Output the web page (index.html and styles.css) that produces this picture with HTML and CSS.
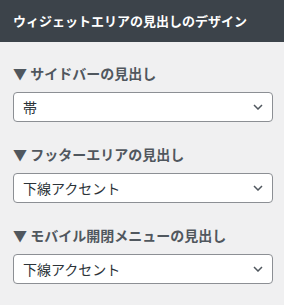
FILE: index.html
```html
<!DOCTYPE html>
<html lang="ja">
<head>
    <meta charset="UTF-8">
    <meta name="viewport" content="width=device-width, initial-scale=1.0">
    <title>ウィジェットエリアの見出しのデザイン</title>
    <link rel="stylesheet" href="styles.css">
</head>
<body>
    <!-- パネルのタイトル -->
    <div class="panel-title">ウィジェットエリアの見出しのデザイン</div>

    <div class="panel-body">
        <div class="control">
            <div class="control-label">▼ サイドバーの見出し</div>
            <div class="select-box">
                <span class="select-value">帯</span>
                <svg class="chevron" width="10" height="6" viewBox="0 0 10 6"><path d="M1 1 L5 5 L9 1" fill="none" stroke="#50575e" stroke-width="1.5"/></svg>
            </div>
        </div>

        <div class="control">
            <div class="control-label">▼ フッターエリアの見出し</div>
            <div class="select-box">
                <span class="select-value">下線アクセント</span>
                <svg class="chevron" width="10" height="6" viewBox="0 0 10 6"><path d="M1 1 L5 5 L9 1" fill="none" stroke="#50575e" stroke-width="1.5"/></svg>
            </div>
        </div>

        <div class="control">
            <div class="control-label">▼ モバイル開閉メニューの見出し</div>
            <div class="select-box">
                <span class="select-value">下線アクセント</span>
                <svg class="chevron" width="10" height="6" viewBox="0 0 10 6"><path d="M1 1 L5 5 L9 1" fill="none" stroke="#50575e" stroke-width="1.5"/></svg>
            </div>
        </div>
    </div>
</body>
</html>
```

FILE: styles.css
```css
body {
    margin: 0;
    background-color: #f0f0f1;
    font-family: "Noto Sans CJK JP", "Noto Sans", sans-serif;
}

/* 上部の濃いタイトルバー */
.panel-title {
    height: 42px;
    background-color: #3c434a;
    color: #ffffff;
    font-size: 13px;
    font-weight: bold;
    line-height: 42px;
    padding-left: 13px;
}

.panel-body {
    padding: 21px 11px 0 13px;
    display: flex;
    flex-direction: column;
    gap: 22px;
}

.control {
    display: flex;
    flex-direction: column;
    gap: 9px;
}

.control-label {
    font-size: 14px;
    font-weight: bold;
    line-height: 20px;
    color: #50575e;
}

/* セレクトボックス */
.select-box {
    height: 28px;
    border: 1px solid #8c8f94;
    border-radius: 4px;
    background-color: #ffffff;
    display: flex;
    align-items: center;
    justify-content: space-between;
    padding: 0 9px 0 9px;
}

.select-value {
    font-size: 14px;
    color: #2c3338;
}

.chevron {
    display: block;
}
```
